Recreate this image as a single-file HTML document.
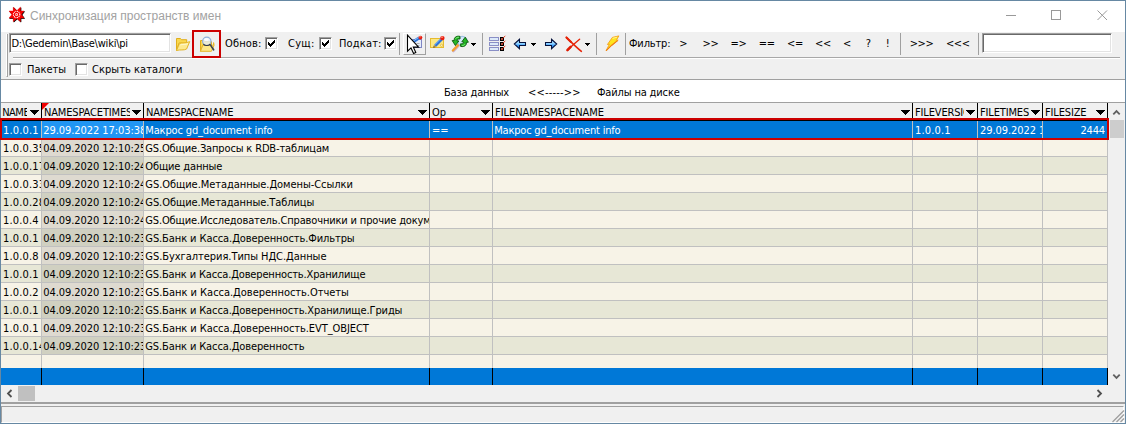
<!DOCTYPE html>
<html lang="ru"><head><meta charset="utf-8"><title>Синхронизация пространств имен</title>
<style>
*{box-sizing:border-box;margin:0;padding:0}
html,body{width:1126px;height:424px;overflow:hidden;background:#f0f0f0}
body{font-family:"DejaVu Sans Condensed","Liberation Sans",sans-serif;font-size:11px;line-height:13px;color:#000;position:relative}
.a{position:absolute}
.t{position:absolute;white-space:pre;height:13px;line-height:13px;letter-spacing:-0.15px}
.c{position:absolute;overflow:hidden;white-space:pre;height:13px;line-height:13px;letter-spacing:-0.15px}
.mono{font-family:"Liberation Mono",monospace;font-size:12px;letter-spacing:0}
.cb{position:absolute;width:13px;height:13px;background:#fff;border:1px solid;border-color:#a0a0a0 #fff #fff #a0a0a0;box-shadow:inset 1px 1px 0 #696969, inset -1px -1px 0 #e3e3e3}
.sep{position:absolute;width:1px;height:22px;top:33px;background:#a0a0a0}
.tri{position:absolute;width:0;height:0;border-left:4.5px solid transparent;border-right:4.5px solid transparent;border-top:5px solid #000}
.dd{position:absolute;width:5px;height:1px;background:#000;top:43px;box-shadow:inset 0 0 0 1px #000}.dd:before{content:'';position:absolute;left:1px;top:1px;width:3px;height:1px;background:#000}.dd:after{content:'';position:absolute;left:2px;top:2px;width:1px;height:1px;background:#000}
.hs{position:absolute;top:103px;width:1px;height:17px;background:#000}
.vs{position:absolute;width:1px;background:#c0c0c0}
.fs{position:absolute;top:368px;width:1px;height:17px;background:#000}
svg{position:absolute;overflow:visible}
</style></head><body>

<div class="a" style="left:0;top:0;width:1126px;height:424px;border:1px solid #6688a3"></div>
<div class="a" style="left:1px;top:1px;width:1124px;height:31px;background:#fff"></div>
<svg style="left:8px;top:6px" width="17" height="17" viewBox="8 6 17 17">
<polygon transform="translate(0.6,0.5)" points="13.3,7.2 16.8,10.7 20.4,7.2 20.4,11.1 23.9,11.1 21.4,14.5 23.9,18 20.4,18 20.4,21.6 16.8,18.4 13.3,21.6 13.3,18 9.1,18 12,14.5 9.1,11.1 13.3,11.1" fill="#000" stroke="#000" stroke-width="0.7"/>
<polygon points="13.3,7.2 16.8,10.7 20.4,7.2 20.4,11.1 23.9,11.1 21.4,14.5 23.9,18 20.4,18 20.4,21.6 16.8,18.4 13.3,21.6 13.3,18 9.1,18 12,14.5 9.1,11.1 13.3,11.1" fill="#f80000" stroke="#f80000" stroke-width="0.5"/>
<circle cx="16.6" cy="14.5" r="3.2" fill="none" stroke="#fff" stroke-width="1.1" stroke-dasharray="1 0.68"/>
<rect x="15.4" y="13.3" width="2.4" height="2.4" fill="#fff"/><rect x="16.15" y="14.05" width="0.9" height="0.9" fill="#f80000"/>
</svg>
<div class="t" style="left:30px;top:9px;height:15px;line-height:15px;font-family:'Liberation Sans',sans-serif;font-size:12px;letter-spacing:0;color:#a2a2a2">Синхронизация пространств имен</div>
<svg style="left:1000px;top:5px" width="120" height="22" viewBox="1000 5 120 22" fill="none" stroke="#999" stroke-width="1">
<path d="M1006 15.5h10"/>
<rect x="1051.5" y="10.5" width="9" height="9"/>
<path d="M1097.5 10.5l9.5 9.5M1107 10.5l-9.5 9.5"/>
</svg>
<div class="a" style="left:6px;top:34px;width:2px;height:43px;border-left:1px solid #fff;border-right:1px solid #a0a0a0;border-bottom:1px solid #a0a0a0"></div>
<div class="a" style="left:9px;top:33px;width:162px;height:20px;background:#fff;border:1px solid;border-color:#a0a0a0 #fff #fff #a0a0a0;box-shadow:inset 1px 1px 0 #696969, inset -1px -1px 0 #e3e3e3"></div>
<div class="t" style="left:11.4px;top:37px;letter-spacing:-0.22px">D:\Gedemin\Base\wiki\pi</div>
<div class="a" style="left:13px;top:57px;width:1107px;height:1px;background:#a8a8a8"></div>
<div class="a" style="left:13px;top:58px;width:1107px;height:1px;background:#fff"></div>
<svg style="left:175px;top:36px" width="17" height="17" viewBox="175 36 17 17">
<path d="M176.5 50.5V38.5H180.5L181.5 39.7H186.7V43H179z" fill="#f9d84e" stroke="#e0ae1c" stroke-width="1" stroke-linejoin="round"/>
<path d="M176.5 50.5L179.4 43.6C182 42.2 186 43.6 189.7 41.6L186.6 49C184 50.6 180 49.4 176.5 50.5z" fill="#fdea90" stroke="#e4b628" stroke-width="1" stroke-linejoin="round"/>
<path d="M180.2 45C182.5 44 185.5 45 188 43.6" stroke="#fff8cc" stroke-width="1" fill="none"/>
</svg>
<div class="a" style="left:192px;top:30px;width:29px;height:28px;border:2px solid #cc0000"></div>
<svg style="left:199px;top:35px" width="17" height="18" viewBox="199 35 17 18">
<path d="M200.5 51.3V40.5H203.8L204.8 41.7H211.5V45H203z" fill="#f9d84e" stroke="#e0ae1c" stroke-width="1" stroke-linejoin="round"/>
<path d="M200.5 51.3L202.8 45.2H213.6V42.6L214 45.6L211.4 51.3z" fill="#fde888" stroke="#e4b628" stroke-width="1" stroke-linejoin="round"/>
<path d="M210.2 44.6L213.6 49.8" stroke="#3c4450" stroke-width="1.7" stroke-linecap="round"/>
<circle cx="206.8" cy="41.3" r="4.2" fill="#e6f1fd" fill-opacity="0.78" stroke="#8fb0dc" stroke-width="1.2"/>
<path d="M203.4 44.2C205 46 208.6 46 210.2 44.2" stroke="#30363e" stroke-width="1.1" fill="none"/>
<ellipse cx="206.4" cy="39.4" rx="2.2" ry="1.5" fill="#fff" fill-opacity="0.9"/>
</svg>
<div class="t" style="left:225px;top:37px;letter-spacing:0.15px">Обнов:</div>
<div class="cb" style="left:265px;top:37px"></div>
<div class="t" style="left:288px;top:37px;letter-spacing:0.3px">Сущ:</div>
<div class="cb" style="left:319px;top:37px"></div>
<div class="t" style="left:339px;top:37px;letter-spacing:0.15px">Подкат:</div>
<div class="cb" style="left:384px;top:37px"></div>
<svg style="left:265px;top:37px" width="13" height="13" viewBox="0 0 13 13"><path shape-rendering="crispEdges" d="M3 5h1v3h-1zM4 6h1v3h-1zM5 7h1v3h-1zM6 6h1v3h-1zM7 5h1v3h-1zM8 4h1v3h-1zM9 3h1v3h-1z" fill="#000"/></svg>
<svg style="left:319px;top:37px" width="13" height="13" viewBox="0 0 13 13"><path shape-rendering="crispEdges" d="M3 5h1v3h-1zM4 6h1v3h-1zM5 7h1v3h-1zM6 6h1v3h-1zM7 5h1v3h-1zM8 4h1v3h-1zM9 3h1v3h-1z" fill="#000"/></svg>
<svg style="left:384px;top:37px" width="13" height="13" viewBox="0 0 13 13"><path shape-rendering="crispEdges" d="M3 5h1v3h-1zM4 6h1v3h-1zM5 7h1v3h-1zM6 6h1v3h-1zM7 5h1v3h-1zM8 4h1v3h-1zM9 3h1v3h-1z" fill="#000"/></svg>
<div class="sep" style="left:399px"></div>
<div class="a" style="left:403px;top:33px;width:23px;height:22px;border:1px solid;border-color:#fff #a0a0a0 #a0a0a0 #fff"></div>
<svg style="left:405px;top:33px" width="20" height="22" viewBox="405 33 20 22">
<rect x="412.5" y="39.5" width="9" height="8" fill="#e6edfb" stroke="#7f86c4"/>
<path d="M416.5 43.5h3M416.5 45.5h3" stroke="#a0a0a0" stroke-width="0.8"/>
<path d="M410.6 43.6L419.4 37.8" stroke="#2f74d8" stroke-width="3"/>
<path d="M411 42.6L419 37.2" stroke="#8fc0f8" stroke-width="1"/>
<circle cx="420.4" cy="37.6" r="1.9" fill="#e81c10"/>
<circle cx="420" cy="36.8" r="0.8" fill="#ff8a70"/>
<path d="M407.5 35.2V51.2L411 47.9L413.6 53.6L415.8 52.6L413.3 47.1H418.6z" fill="#fff" stroke="#000" stroke-width="1.1" stroke-linejoin="miter"/>
</svg>
<svg style="left:429px;top:34px" width="18" height="16" viewBox="429 34 18 16">
<rect x="430.5" y="38.5" width="13" height="9" fill="#fbe884" stroke="#e6bb30"/>
<circle cx="441.6" cy="45.3" r="1.1" fill="#fff6c8" stroke="#e0b030" stroke-width=".7"/>
<path d="M435.2 45.8L441.6 39.2" stroke="#2f74d8" stroke-width="3"/>
<path d="M434.8 44.8L440.8 38.6" stroke="#8fc0f8" stroke-width="1"/>
<path d="M433.2 47.8l.7-2.4 1.8 1.6z" fill="#303030"/>
<path d="M434 45.6l1.6 1.5" stroke="#c09040" stroke-width="1.2"/>
<circle cx="442.4" cy="38.1" r="2.2" fill="#e81c10"/>
<circle cx="442" cy="37.2" r="0.9" fill="#ff8a70"/>
</svg>
<svg style="left:451px;top:35px" width="18" height="18" viewBox="451 35 18 18">
<path d="M453.4 51L459 45.2" stroke="#c7b3dc" stroke-width="2.6" stroke-linecap="round"/>
<path d="M452.9 50.5L458.5 44.7" stroke="#f5a030" stroke-width="2.4" stroke-linecap="round"/>
<circle cx="462.3" cy="41" r="4.7" fill="#d6e9fb" stroke="#a4c4e6" stroke-width="1.2"/>
<g fill="#25b825" stroke="#0a5a0a" stroke-width="0.9" stroke-linejoin="round">
<path id="ga" d="M460 36.4C455.6 35.4 453.6 38.4 454.4 40.4L452.2 40.6L455.4 45.6L458.8 41L456.9 40.8C456.7 39.6 457.6 38.6 460 39z"/>
<path d="M460 36.4C455.6 35.4 453.6 38.4 454.4 40.4L452.2 40.6L455.4 45.6L458.8 41L456.9 40.8C456.7 39.6 457.6 38.6 460 39z" transform="rotate(180 460.3 41.4)"/>
</g>
<path d="M455.6 38.6C456.4 37.4 457.6 37.2 458.8 37.4" stroke="#8cf08c" stroke-width="0.9" fill="none"/>
<path d="M465 44.2C464.2 45.4 463 45.6 461.8 45.4" stroke="#8cf08c" stroke-width="0.9" fill="none"/>
</svg>
<div class="dd" style="left:471px"></div>
<div class="sep" style="left:482px"></div>
<svg style="left:489px;top:36px" width="18" height="16" viewBox="489 36 18 16">
<g fill="#dceafa" stroke="#8a8fc6" stroke-width="1"><rect x="489.5" y="37.5" width="9" height="3"/><rect x="489.5" y="42.5" width="9" height="3"/><rect x="489.5" y="47.5" width="9" height="3"/></g>
<g fill="#fff" stroke="#000" stroke-width="1.3"><rect x="500.65" y="37.65" width="2.7" height="2.7"/><rect x="500.65" y="42.65" width="2.7" height="2.7"/><rect x="500.65" y="47.65" width="2.7" height="2.7"/></g>
<g fill="#e82000"><rect x="501.4" y="38.4" width="1.4" height="1.4"/><rect x="501.4" y="43.4" width="1.4" height="1.4"/><rect x="501.4" y="48.4" width="1.4" height="1.4"/></g>
<g stroke="#e83010" stroke-width="0.9"><path d="M502.6 38.6L505.3 35.8M502.6 43.6L505.3 40.8M502.6 48.6L505.3 45.8"/></g>
</svg>
<svg style="left:513px;top:38px" width="14" height="13" viewBox="513 38 14 13">
<defs><linearGradient id="ag" x1="0" y1="0" x2="0" y2="1"><stop offset="0" stop-color="#4aa8ff"/><stop offset="0.38" stop-color="#a8e0ff"/><stop offset="0.7" stop-color="#2e98ff"/><stop offset="1" stop-color="#1f78f0"/></linearGradient></defs>
<path d="M514.3 44L519.5 39.3V42.5H525.5V45.5H519.5V48.7z" fill="url(#ag)" stroke="#06123c" stroke-width="1.05" stroke-linejoin="miter"/>
</svg>
<div class="dd" style="left:531px"></div>
<svg style="left:544px;top:38px" width="14" height="13" viewBox="544 38 14 13">
<path d="M556.7 44L551.5 39.3V42.5H545.5V45.5H551.5V48.7z" fill="url(#ag)" stroke="#06123c" stroke-width="1.05" stroke-linejoin="miter"/>
</svg>
<svg style="left:565px;top:36px" width="18" height="17" viewBox="565 36 18 17">
<path d="M566.6 37.6C570.5 41.5 576 47 581.4 51.4" stroke="#e62408" stroke-width="1.5" fill="none" stroke-linecap="round"/>
<path d="M566.4 37.4L571 42" stroke="#e62408" stroke-width="2.1" stroke-linecap="round"/>
<path d="M579.6 39.2C575.5 42.5 571 46.5 567.6 50.2" stroke="#e62408" stroke-width="1.4" fill="none" stroke-linecap="round"/>
<path d="M567.4 50.2l3.2-3.4" stroke="#de1c04" stroke-width="2.5" stroke-linecap="round"/>
</svg>
<div class="dd" style="left:585px"></div>
<div class="sep" style="left:596px"></div>
<svg style="left:605px;top:35px" width="16" height="17" viewBox="605 35 16 17">
<path d="M612.4 37.4L618.9 35.9L616.3 40.3L618.2 40.1L611.6 45.4L606 50.9L609.4 44.2L607.4 44.5z" fill="#ffe41c" stroke="#f5a21c" stroke-width="0.9" stroke-linejoin="round"/>
<path d="M606.2 50.6L611.8 45.2L617.6 40.6" stroke="#f07c14" stroke-width="1.1" fill="none"/>
<path d="M612.6 38.4L617 37.2" stroke="#fff6a0" stroke-width="0.9"/>
</svg>
<div class="sep" style="left:625px"></div>
<div class="t" style="left:629px;top:37px">Фильтр:</div>
<div class="t" style="left:663.3px;top:37px;width:40px;text-align:center;letter-spacing:-0.4px">&gt;</div>
<div class="t" style="left:690.5px;top:37px;width:40px;text-align:center;letter-spacing:-0.4px">&gt;&gt;</div>
<div class="t" style="left:718.5px;top:37px;width:40px;text-align:center;letter-spacing:-0.4px">=&gt;</div>
<div class="t" style="left:746.7px;top:37px;width:40px;text-align:center;letter-spacing:-0.4px">==</div>
<div class="t" style="left:775.0px;top:37px;width:40px;text-align:center;letter-spacing:-0.4px">&lt;=</div>
<div class="t" style="left:803.0px;top:37px;width:40px;text-align:center;letter-spacing:-0.4px">&lt;&lt;</div>
<div class="t" style="left:827.0px;top:37px;width:40px;text-align:center;letter-spacing:-0.4px">&lt;</div>
<div class="t" style="left:848.3px;top:37px;width:40px;text-align:center;letter-spacing:-0.4px">?</div>
<div class="t" style="left:867.5px;top:37px;width:40px;text-align:center;letter-spacing:-0.4px">!</div>
<div class="t" style="left:901.5px;top:37px;width:40px;text-align:center;letter-spacing:-0.4px">&gt;&gt;&gt;</div>
<div class="t" style="left:937.8px;top:37px;width:40px;text-align:center;letter-spacing:-0.4px">&lt;&lt;&lt;</div>
<div class="sep" style="left:900px"></div>
<div class="sep" style="left:978px"></div>
<div class="a" style="left:982px;top:33px;width:130px;height:20px;background:#fff;border:1px solid;border-color:#a0a0a0 #fff #fff #a0a0a0;box-shadow:inset 1px 1px 0 #696969, inset -1px -1px 0 #e3e3e3"></div>
<div class="cb" style="left:9px;top:63px"></div>
<div class="t" style="left:27px;top:63px;letter-spacing:0">Пакеты</div>
<div class="cb" style="left:75px;top:63px"></div>
<div class="t" style="left:92px;top:63px;letter-spacing:0.05px">Скрыть каталоги</div>
<div class="a" style="left:1px;top:79px;width:1124px;height:1px;background:#a0a0a0"></div>
<div class="a" style="left:1px;top:80px;width:1124px;height:22px;background:#fff"></div>
<div class="t" style="left:444px;top:86px;letter-spacing:-0.17px">База данных</div>
<div class="t" style="left:528px;top:86px;letter-spacing:0.2px">&lt;&lt;-----&gt;&gt;</div>
<div class="t" style="left:597px;top:86px">Файлы на диске</div>
<div class="a" style="left:1px;top:102px;width:1124px;height:1px;background:#a0a0a0"></div>
<div class="a" style="left:1px;top:103px;width:1107px;height:17px;background:#f0f0f0"></div>
<div class="a" style="left:1px;top:120px;width:1107px;height:1px;background:#000"></div>
<div class="hs" style="left:41px"></div>
<div class="c" style="left:3px;top:106px;width:25px;letter-spacing:-0.5px;margin-left:-0.8px">NAMESPACEVERSION</div>
<svg style="left:30px;top:110px" width="9" height="5" shape-rendering="crispEdges"><path d="M0 0h9v1h-1v1h-1v1h-1v1h-1v1h-1v-1h-1v-1h-1v-1h-1v-1h-1z" fill="#000"/></svg>
<div class="hs" style="left:143px"></div>
<div class="c" style="left:44px;top:106px;width:86px">NAMESPACETIMESTAMP</div>
<svg style="left:132px;top:110px" width="9" height="5" shape-rendering="crispEdges"><path d="M0 0h9v1h-1v1h-1v1h-1v1h-1v1h-1v-1h-1v-1h-1v-1h-1v-1h-1z" fill="#000"/></svg>
<div class="hs" style="left:429px"></div>
<div class="c" style="left:146px;top:106px;width:270px">NAMESPACENAME</div>
<svg style="left:418px;top:110px" width="9" height="5" shape-rendering="crispEdges"><path d="M0 0h9v1h-1v1h-1v1h-1v1h-1v1h-1v-1h-1v-1h-1v-1h-1v-1h-1z" fill="#000"/></svg>
<div class="hs" style="left:492px"></div>
<div class="c" style="left:432px;top:106px;width:47px">Op</div>
<svg style="left:481px;top:110px" width="9" height="5" shape-rendering="crispEdges"><path d="M0 0h9v1h-1v1h-1v1h-1v1h-1v1h-1v-1h-1v-1h-1v-1h-1v-1h-1z" fill="#000"/></svg>
<div class="hs" style="left:912px"></div>
<div class="c" style="left:495px;top:106px;width:404px;letter-spacing:-0.03px">FILENAMESPACENAME</div>
<svg style="left:901px;top:110px" width="9" height="5" shape-rendering="crispEdges"><path d="M0 0h9v1h-1v1h-1v1h-1v1h-1v1h-1v-1h-1v-1h-1v-1h-1v-1h-1z" fill="#000"/></svg>
<div class="hs" style="left:977px"></div>
<div class="c" style="left:915px;top:106px;width:49px">FILEVERSION</div>
<svg style="left:966px;top:110px" width="9" height="5" shape-rendering="crispEdges"><path d="M0 0h9v1h-1v1h-1v1h-1v1h-1v1h-1v-1h-1v-1h-1v-1h-1v-1h-1z" fill="#000"/></svg>
<div class="hs" style="left:1042px"></div>
<div class="c" style="left:980px;top:106px;width:49px">FILETIMESTAMP</div>
<svg style="left:1031px;top:110px" width="9" height="5" shape-rendering="crispEdges"><path d="M0 0h9v1h-1v1h-1v1h-1v1h-1v1h-1v-1h-1v-1h-1v-1h-1v-1h-1z" fill="#000"/></svg>
<div class="hs" style="left:1107px"></div>
<div class="c" style="left:1045px;top:106px;width:49px">FILESIZE</div>
<svg style="left:1096px;top:110px" width="9" height="5" shape-rendering="crispEdges"><path d="M0 0h9v1h-1v1h-1v1h-1v1h-1v1h-1v-1h-1v-1h-1v-1h-1v-1h-1z" fill="#000"/></svg>
<svg style="left:42px;top:103px" width="7" height="7"><path d="M0 0h7L0 7z" fill="#f00000"/></svg>
<div class="a" style="left:1px;top:121px;width:1107px;height:17px;background:#0078d7"></div>
<div class="a" style="left:42px;top:121px;width:101px;height:17px;background:#2196f3"></div>
<div class="a" style="left:1px;top:138px;width:1107px;height:1px;background:#c0c0c0"></div>
<div class="c" style="left:1px;top:124px;width:40px;padding-left:2.0px;color:#fff;letter-spacing:0.17px">1.0.0.1</div>
<div class="c" style="left:42px;top:124px;width:101px;padding-left:1.3px;color:#fff;letter-spacing:-0.07px">29.09.2022 17:03:38</div>
<div class="c" style="left:144px;top:124px;width:285px;padding-left:1.3px;color:#fff">Макрос gd_document info</div>
<div class="c" style="left:430px;top:124px;width:62px;padding-left:2.0px;color:#fff">==</div>
<div class="c" style="left:493px;top:124px;width:419px;padding-left:1.2px;color:#fff;letter-spacing:-0.19px">Макрос gd_document info</div>
<div class="c" style="left:913px;top:124px;width:64px;padding-left:2.0px;color:#fff;letter-spacing:0.17px">1.0.0.1</div>
<div class="c" style="left:978px;top:124px;width:64px;padding-left:2.0px;color:#fff;letter-spacing:-0.07px">29.09.2022 17:03:38</div>
<div class="c" style="left:1043px;top:124px;width:62px;color:#fff;text-align:right">2444</div>
<div class="a" style="left:1px;top:139px;width:1107px;height:17px;background:#f7f3e7"></div>
<div class="a" style="left:42px;top:139px;width:101px;height:17px;background:#dedad0"></div>
<div class="a" style="left:1px;top:156px;width:1107px;height:1px;background:#c0c0c0"></div>
<div class="c" style="left:1px;top:142px;width:40px;padding-left:2.0px;color:#000;letter-spacing:0.17px">1.0.0.35</div>
<div class="c" style="left:42px;top:142px;width:101px;padding-left:1.3px;color:#000;letter-spacing:-0.07px">04.09.2020 12:10:25</div>
<div class="c" style="left:144px;top:142px;width:285px;padding-left:1.3px;color:#000">GS.Общие.Запросы к RDB-таблицам</div>
<div class="a" style="left:1px;top:157px;width:1107px;height:17px;background:#e7e7d6"></div>
<div class="a" style="left:42px;top:157px;width:101px;height:17px;background:#d0d0c1"></div>
<div class="a" style="left:1px;top:174px;width:1107px;height:1px;background:#c0c0c0"></div>
<div class="c" style="left:1px;top:160px;width:40px;padding-left:2.0px;color:#000;letter-spacing:0.17px">1.0.0.17</div>
<div class="c" style="left:42px;top:160px;width:101px;padding-left:1.3px;color:#000;letter-spacing:-0.07px">04.09.2020 12:10:24</div>
<div class="c" style="left:144px;top:160px;width:285px;padding-left:1.3px;color:#000">Общие данные</div>
<div class="a" style="left:1px;top:175px;width:1107px;height:17px;background:#f7f3e7"></div>
<div class="a" style="left:42px;top:175px;width:101px;height:17px;background:#dedad0"></div>
<div class="a" style="left:1px;top:192px;width:1107px;height:1px;background:#c0c0c0"></div>
<div class="c" style="left:1px;top:178px;width:40px;padding-left:2.0px;color:#000;letter-spacing:0.17px">1.0.0.33</div>
<div class="c" style="left:42px;top:178px;width:101px;padding-left:1.3px;color:#000;letter-spacing:-0.07px">04.09.2020 12:10:24</div>
<div class="c" style="left:144px;top:178px;width:285px;padding-left:1.3px;color:#000;letter-spacing:-0.06px">GS.Общие.Метаданные.Домены-Ссылки</div>
<div class="a" style="left:1px;top:193px;width:1107px;height:17px;background:#e7e7d6"></div>
<div class="a" style="left:42px;top:193px;width:101px;height:17px;background:#d0d0c1"></div>
<div class="a" style="left:1px;top:210px;width:1107px;height:1px;background:#c0c0c0"></div>
<div class="c" style="left:1px;top:196px;width:40px;padding-left:2.0px;color:#000;letter-spacing:0.17px">1.0.0.28</div>
<div class="c" style="left:42px;top:196px;width:101px;padding-left:1.3px;color:#000;letter-spacing:-0.07px">04.09.2020 12:10:24</div>
<div class="c" style="left:144px;top:196px;width:285px;padding-left:1.3px;color:#000;letter-spacing:-0.07px">GS.Общие.Метаданные.Таблицы</div>
<div class="a" style="left:1px;top:211px;width:1107px;height:17px;background:#f7f3e7"></div>
<div class="a" style="left:42px;top:211px;width:101px;height:17px;background:#dedad0"></div>
<div class="a" style="left:1px;top:228px;width:1107px;height:1px;background:#c0c0c0"></div>
<div class="c" style="left:1px;top:214px;width:40px;padding-left:2.0px;color:#000;letter-spacing:0.17px">1.0.0.4</div>
<div class="c" style="left:42px;top:214px;width:101px;padding-left:1.3px;color:#000;letter-spacing:-0.07px">04.09.2020 12:10:24</div>
<div class="c" style="left:144px;top:214px;width:285px;padding-left:1.3px;color:#000">GS.Общие.Исследователь.Справочники и прочие документы</div>
<div class="a" style="left:1px;top:229px;width:1107px;height:17px;background:#e7e7d6"></div>
<div class="a" style="left:42px;top:229px;width:101px;height:17px;background:#d0d0c1"></div>
<div class="a" style="left:1px;top:246px;width:1107px;height:1px;background:#c0c0c0"></div>
<div class="c" style="left:1px;top:232px;width:40px;padding-left:2.0px;color:#000;letter-spacing:0.17px">1.0.0.1</div>
<div class="c" style="left:42px;top:232px;width:101px;padding-left:1.3px;color:#000;letter-spacing:-0.07px">04.09.2020 12:10:23</div>
<div class="c" style="left:144px;top:232px;width:285px;padding-left:1.3px;color:#000;letter-spacing:-0.09px">GS.Банк и Касса.Доверенность.Фильтры</div>
<div class="a" style="left:1px;top:247px;width:1107px;height:17px;background:#f7f3e7"></div>
<div class="a" style="left:42px;top:247px;width:101px;height:17px;background:#dedad0"></div>
<div class="a" style="left:1px;top:264px;width:1107px;height:1px;background:#c0c0c0"></div>
<div class="c" style="left:1px;top:250px;width:40px;padding-left:2.0px;color:#000;letter-spacing:0.17px">1.0.0.8</div>
<div class="c" style="left:42px;top:250px;width:101px;padding-left:1.3px;color:#000;letter-spacing:-0.07px">04.09.2020 12:10:23</div>
<div class="c" style="left:144px;top:250px;width:285px;padding-left:1.3px;color:#000;letter-spacing:-0.05px">GS.Бухгалтерия.Типы НДС.Данные</div>
<div class="a" style="left:1px;top:265px;width:1107px;height:17px;background:#e7e7d6"></div>
<div class="a" style="left:42px;top:265px;width:101px;height:17px;background:#d0d0c1"></div>
<div class="a" style="left:1px;top:282px;width:1107px;height:1px;background:#c0c0c0"></div>
<div class="c" style="left:1px;top:268px;width:40px;padding-left:2.0px;color:#000;letter-spacing:0.17px">1.0.0.1</div>
<div class="c" style="left:42px;top:268px;width:101px;padding-left:1.3px;color:#000;letter-spacing:-0.07px">04.09.2020 12:10:23</div>
<div class="c" style="left:144px;top:268px;width:285px;padding-left:1.3px;color:#000">GS.Банк и Касса.Доверенность.Хранилище</div>
<div class="a" style="left:1px;top:283px;width:1107px;height:17px;background:#f7f3e7"></div>
<div class="a" style="left:42px;top:283px;width:101px;height:17px;background:#dedad0"></div>
<div class="a" style="left:1px;top:300px;width:1107px;height:1px;background:#c0c0c0"></div>
<div class="c" style="left:1px;top:286px;width:40px;padding-left:2.0px;color:#000;letter-spacing:0.17px">1.0.0.2</div>
<div class="c" style="left:42px;top:286px;width:101px;padding-left:1.3px;color:#000;letter-spacing:-0.07px">04.09.2020 12:10:23</div>
<div class="c" style="left:144px;top:286px;width:285px;padding-left:1.3px;color:#000;letter-spacing:-0.03px">GS.Банк и Касса.Доверенность.Отчеты</div>
<div class="a" style="left:1px;top:301px;width:1107px;height:17px;background:#e7e7d6"></div>
<div class="a" style="left:42px;top:301px;width:101px;height:17px;background:#d0d0c1"></div>
<div class="a" style="left:1px;top:318px;width:1107px;height:1px;background:#c0c0c0"></div>
<div class="c" style="left:1px;top:304px;width:40px;padding-left:2.0px;color:#000;letter-spacing:0.17px">1.0.0.1</div>
<div class="c" style="left:42px;top:304px;width:101px;padding-left:1.3px;color:#000;letter-spacing:-0.07px">04.09.2020 12:10:23</div>
<div class="c" style="left:144px;top:304px;width:285px;padding-left:1.3px;color:#000;letter-spacing:-0.12px">GS.Банк и Касса.Доверенность.Хранилище.Гриды</div>
<div class="a" style="left:1px;top:319px;width:1107px;height:17px;background:#f7f3e7"></div>
<div class="a" style="left:42px;top:319px;width:101px;height:17px;background:#dedad0"></div>
<div class="a" style="left:1px;top:336px;width:1107px;height:1px;background:#c0c0c0"></div>
<div class="c" style="left:1px;top:322px;width:40px;padding-left:2.0px;color:#000;letter-spacing:0.17px">1.0.0.1</div>
<div class="c" style="left:42px;top:322px;width:101px;padding-left:1.3px;color:#000;letter-spacing:-0.07px">04.09.2020 12:10:23</div>
<div class="c" style="left:144px;top:322px;width:285px;padding-left:1.3px;color:#000;letter-spacing:-0.07px">GS.Банк и Касса.Доверенность.EVT_OBJECT</div>
<div class="a" style="left:1px;top:337px;width:1107px;height:17px;background:#e7e7d6"></div>
<div class="a" style="left:42px;top:337px;width:101px;height:17px;background:#d0d0c1"></div>
<div class="a" style="left:1px;top:354px;width:1107px;height:1px;background:#c0c0c0"></div>
<div class="c" style="left:1px;top:340px;width:40px;padding-left:2.0px;color:#000;letter-spacing:0.17px">1.0.0.14</div>
<div class="c" style="left:42px;top:340px;width:101px;padding-left:1.3px;color:#000;letter-spacing:-0.07px">04.09.2020 12:10:23</div>
<div class="c" style="left:144px;top:340px;width:285px;padding-left:1.3px;color:#000;letter-spacing:-0.12px">GS.Банк и Касса.Доверенность</div>
<div class="a" style="left:1px;top:355px;width:1107px;height:13px;background:#f7f3e7"></div>
<div class="vs" style="left:41px;top:121px;height:247px"></div>
<div class="vs" style="left:143px;top:121px;height:247px"></div>
<div class="vs" style="left:429px;top:121px;height:247px"></div>
<div class="vs" style="left:492px;top:121px;height:247px"></div>
<div class="vs" style="left:912px;top:121px;height:247px"></div>
<div class="vs" style="left:977px;top:121px;height:247px"></div>
<div class="vs" style="left:1042px;top:121px;height:247px"></div>
<div class="vs" style="left:1107px;top:121px;height:247px"></div>
<div class="a" style="left:1px;top:368px;width:1107px;height:17px;background:#0078d7"></div>
<div class="fs" style="left:41px"></div>
<div class="fs" style="left:143px"></div>
<div class="fs" style="left:429px"></div>
<div class="fs" style="left:492px"></div>
<div class="fs" style="left:912px"></div>
<div class="fs" style="left:977px"></div>
<div class="fs" style="left:1042px"></div>
<div class="fs" style="left:1107px"></div>
<div class="a" style="left:1108px;top:103px;width:17px;height:282px;background:#f0f0f0"></div>
<div class="a" style="left:1110px;top:120px;width:14px;height:18px;background:#cdcdcd"></div>
<svg style="left:1108px;top:103px" width="17" height="282" viewBox="0 0 17 282" fill="none" stroke="#606060" stroke-width="1.8">
<path d="M5.3 11.3L8.5 8.1l3.2 3.2"/><path d="M5.3 271.7L8.5 274.9l3.2-3.2"/></svg>
<div class="a" style="left:1px;top:385px;width:1124px;height:17px;background:#f0f0f0"></div>
<div class="a" style="left:18px;top:386px;width:17px;height:15px;background:#c0c0c0"></div>
<svg style="left:1px;top:385px" width="1107" height="17" viewBox="0 0 1107 17" fill="none" stroke="#505050" stroke-width="1.8">
<path d="M10.5 5L7 8.5l3.5 3.5"/><path d="M1096.5 5l3.5 3.5-3.5 3.5"/></svg>
<div class="a" style="left:0;top:118px;width:1109px;height:22px;border:2px solid #cc0000"></div>
<div class="a" style="left:1px;top:402px;width:1124px;height:2px;background:#a0a0a0"></div>
<div class="a" style="left:1px;top:406px;width:1123px;height:17px;border:1px solid;border-color:#a0a0a0 #fff #fff #a0a0a0"></div>
<svg style="left:1110px;top:408px" width="14" height="14" viewBox="1110 408 14 14" stroke="#a0a0a0" stroke-width="1.3"><path d="M1112.5 422L1124 410.5M1116.5 422L1124 414.5M1120.5 422L1124 418.5"/></svg>
</body></html>
